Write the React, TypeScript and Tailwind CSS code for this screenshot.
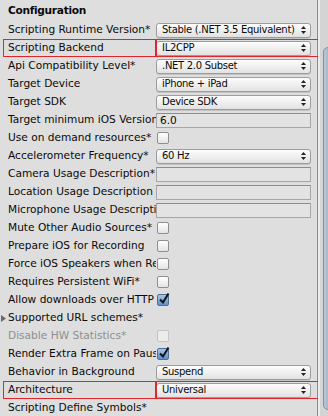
type Row = {
  label: string
  kind: 'popup' | 'text' | 'check' | 'none'
  value?: string
  checked?: boolean
  disabled?: boolean
  foldout?: boolean
  highlight?: boolean
}

const rows: Row[] = [
  { label: 'Scripting Runtime Version*', kind: 'popup', value: 'Stable (.NET 3.5 Equivalent)' },
  { label: 'Scripting Backend', kind: 'popup', value: 'IL2CPP', highlight: true },
  { label: 'Api Compatibility Level*', kind: 'popup', value: '.NET 2.0 Subset' },
  { label: 'Target Device', kind: 'popup', value: 'iPhone + iPad' },
  { label: 'Target SDK', kind: 'popup', value: 'Device SDK' },
  { label: 'Target minimum iOS Version', kind: 'text', value: '6.0' },
  { label: 'Use on demand resources*', kind: 'check' },
  { label: 'Accelerometer Frequency*', kind: 'popup', value: '60 Hz' },
  { label: 'Camera Usage Description*', kind: 'text', value: '' },
  { label: 'Location Usage Description', kind: 'text', value: '' },
  { label: 'Microphone Usage Description', kind: 'text', value: '' },
  { label: 'Mute Other Audio Sources*', kind: 'check' },
  { label: 'Prepare iOS for Recording', kind: 'check' },
  { label: 'Force iOS Speakers when Recording', kind: 'check' },
  { label: 'Requires Persistent WiFi*', kind: 'check' },
  { label: 'Allow downloads over HTTP (nonsecure)*', kind: 'check', checked: true },
  { label: 'Supported URL schemes*', kind: 'none', foldout: true },
  { label: 'Disable HW Statistics*', kind: 'check', disabled: true },
  { label: 'Render Extra Frame on Pause*', kind: 'check', checked: true },
  { label: 'Behavior in Background', kind: 'popup', value: 'Suspend' },
  { label: 'Architecture', kind: 'popup', value: 'Universal', highlight: true },
  { label: 'Scripting Define Symbols*', kind: 'none' },
]

function PopupArrows() {
  return (
    <svg width="5" height="8" viewBox="0 0 5 8" className="shrink-0">
      <path d="M2.5 0 L5 3 L0 3 Z" fill="#222" />
      <path d="M0 5 L5 5 L2.5 8 Z" fill="#222" />
    </svg>
  )
}

function Popup({ value }: { value: string }) {
  return (
    <div className="flex h-[15px] w-[155px] items-center justify-between rounded-[3px] border border-[#9c9c9c] bg-gradient-to-b from-[#fdfdfd] to-[#e2e2e2] pl-[5px] pr-[4px] shadow-[0_1px_0_rgba(0,0,0,0.12)]">
      <span className="whitespace-nowrap text-[10px] leading-none tracking-[-0.3px]">{value}</span>
      <PopupArrows />
    </div>
  )
}

function TextField({ value }: { value: string }) {
  return (
    <div className="flex h-[15px] w-[155px] items-center border border-[#a6a6a6] border-t-[#8c8c8c] bg-[#e3e3e3] pl-[3px] leading-none">
      {value}
    </div>
  )
}

function Check({ checked, disabled }: { checked?: boolean; disabled?: boolean }) {
  if (checked) {
    return (
      <div className="relative ml-[1px] h-[12px] w-[12px] rounded-[2px] border border-[#4f6f95] bg-gradient-to-b from-[#a9c5e6] to-[#5d8fc9]">
        <svg width="12" height="13" viewBox="0 0 12 13" className="absolute left-[0px] top-[-3px]">
          <path d="M2 7.5 L5 10.5 L10.5 1.5" stroke="#111" strokeWidth="2" fill="none" />
        </svg>
      </div>
    )
  }
  return (
    <div
      className={
        disabled
          ? 'ml-[1px] h-[12px] w-[12px] rounded-[2px] border border-[#c4c4c4] bg-[#ececec]'
          : 'ml-[1px] h-[12px] w-[12px] rounded-[2px] border border-[#8f8f8f] bg-gradient-to-b from-[#ffffff] to-[#e4e4e4]'
      }
    />
  )
}

export default function App() {
  return (
    <div className="flex h-[416px] w-[328px] overflow-hidden bg-[#dedede] text-[10.6px] text-[#0a0a0a] [font-family:'DejaVu_Sans',sans-serif]">
      <div className="w-[317px] shrink-0">
        <div className="flex h-[21px] items-center pl-[8px] font-bold tracking-[-0.3px]">Configuration</div>
        {rows.map((r) => (
          <div key={r.label} className="relative flex h-[18px] items-center">
            {r.highlight && (
              <>
                <div className="pointer-events-none absolute left-[3px] top-0 h-[18px] w-[153px] border border-[#e0262a]" />
                <div className="pointer-events-none absolute left-[156px] top-0 h-[18px] w-[163px] border border-[#e0262a]" />
              </>
            )}
            {r.foldout && (
              <svg width="5" height="7" viewBox="0 0 5 7" className="absolute left-[1px] top-[6px]">
                <path d="M0 0 L5 3.5 L0 7 Z" fill="#6a6a6a" />
              </svg>
            )}
            <div
              className={
                'w-[156px] shrink-0 overflow-hidden whitespace-nowrap pl-[8px] ' +
                (r.disabled ? 'text-[#8e8e8e]' : '')
              }
            >
              {r.label}
            </div>
            <div className="w-[156px]">
              {r.kind === 'popup' && <Popup value={r.value ?? ''} />}
              {r.kind === 'text' && <TextField value={r.value ?? ''} />}
              {r.kind === 'check' && <Check checked={r.checked} disabled={r.disabled} />}
            </div>
          </div>
        ))}
      </div>
      <div className="w-px shrink-0 bg-[#8a8a8a]" />
      <div className="relative flex-1 border-l-[2px] border-[#ececec] bg-[#d4d4d4]">
        <div className="absolute left-[3px] top-[47px] h-[363px] w-[10px] rounded-[5px] border border-[#7f91a8] bg-gradient-to-r from-[#b9c7d8] to-[#93a7c0]" />
      </div>
    </div>
  )
}
